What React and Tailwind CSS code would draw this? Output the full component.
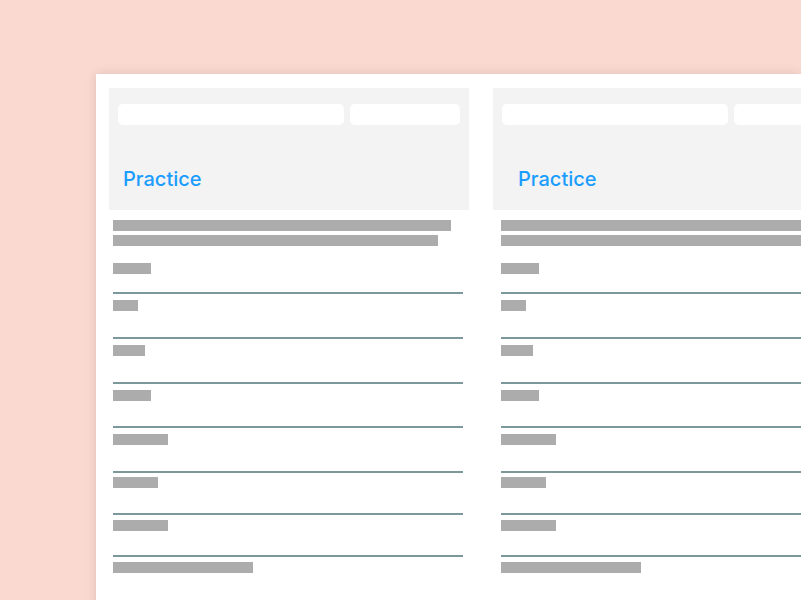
const ROWS = [
  { bar: 'w-[25px]', cls: 'h-[45px] pt-[6px]' },
  { bar: 'w-[32px]', cls: 'h-[45px] pt-[6px]' },
  { bar: 'w-[38px]', cls: 'h-[44px] pt-[6px]' },
  { bar: 'w-[55px]', cls: 'h-[45px] pt-[6px]' },
  { bar: 'w-[45px]', cls: 'h-[42px] pt-[4px]' },
  { bar: 'w-[55px]', cls: 'h-[42px] pt-[5px]' },
  { bar: 'w-[140px]', cls: 'h-[45px] pt-[5px]' },
]

function Bar({ className }) {
  return <div className={`h-[11px] bg-[#acacac] ${className}`} />
}

function Card({ titlePad, bodyPad }) {
  return (
    <div className="w-[360px] shrink-0">
      {/* Header */}
      <div className="h-[122px] bg-[#f3f3f3] px-[9px] pt-[16px]">
        <div className="flex gap-[6px]">
          <div className="h-[21px] w-[228px] rounded-[5px] bg-white" />
          <div className="h-[21px] w-[110px] shrink-0 rounded-[5px] bg-white" />
        </div>
        <p className={`mt-[42px] text-[20px] leading-6 font-medium text-[#1a9dff] ${titlePad}`}>
          Practice
        </p>
      </div>

      {/* Body */}
      <div className={`pt-[10px] ${bodyPad}`}>
        <Bar className="w-[338px]" />
        <Bar className="mt-[4px] w-[325px]" />
        <div className="h-[46px] pt-[17px]">
          <Bar className="w-[38px]" />
        </div>
        {ROWS.map((row, i) => (
          <div key={i} className={`w-[350px] border-t-2 border-[#7d989b] ${row.cls}`}>
            <Bar className={row.bar} />
          </div>
        ))}
      </div>
    </div>
  )
}

export default function App() {
  return (
    <div className="h-[600px] overflow-hidden bg-[#fad9d0] pt-[74px] pl-[96px] font-['Inter',sans-serif]">
      <div className="h-[600px] overflow-hidden bg-white pl-[13px] pt-[14px] shadow-[0_0_10px_rgba(0,0,0,0.12)]">
        <div className="flex gap-6">
          <Card titlePad="pl-[5px]" bodyPad="pl-[4px]" />
          <Card titlePad="pl-[16px]" bodyPad="pl-[8px]" />
        </div>
      </div>
    </div>
  )
}
